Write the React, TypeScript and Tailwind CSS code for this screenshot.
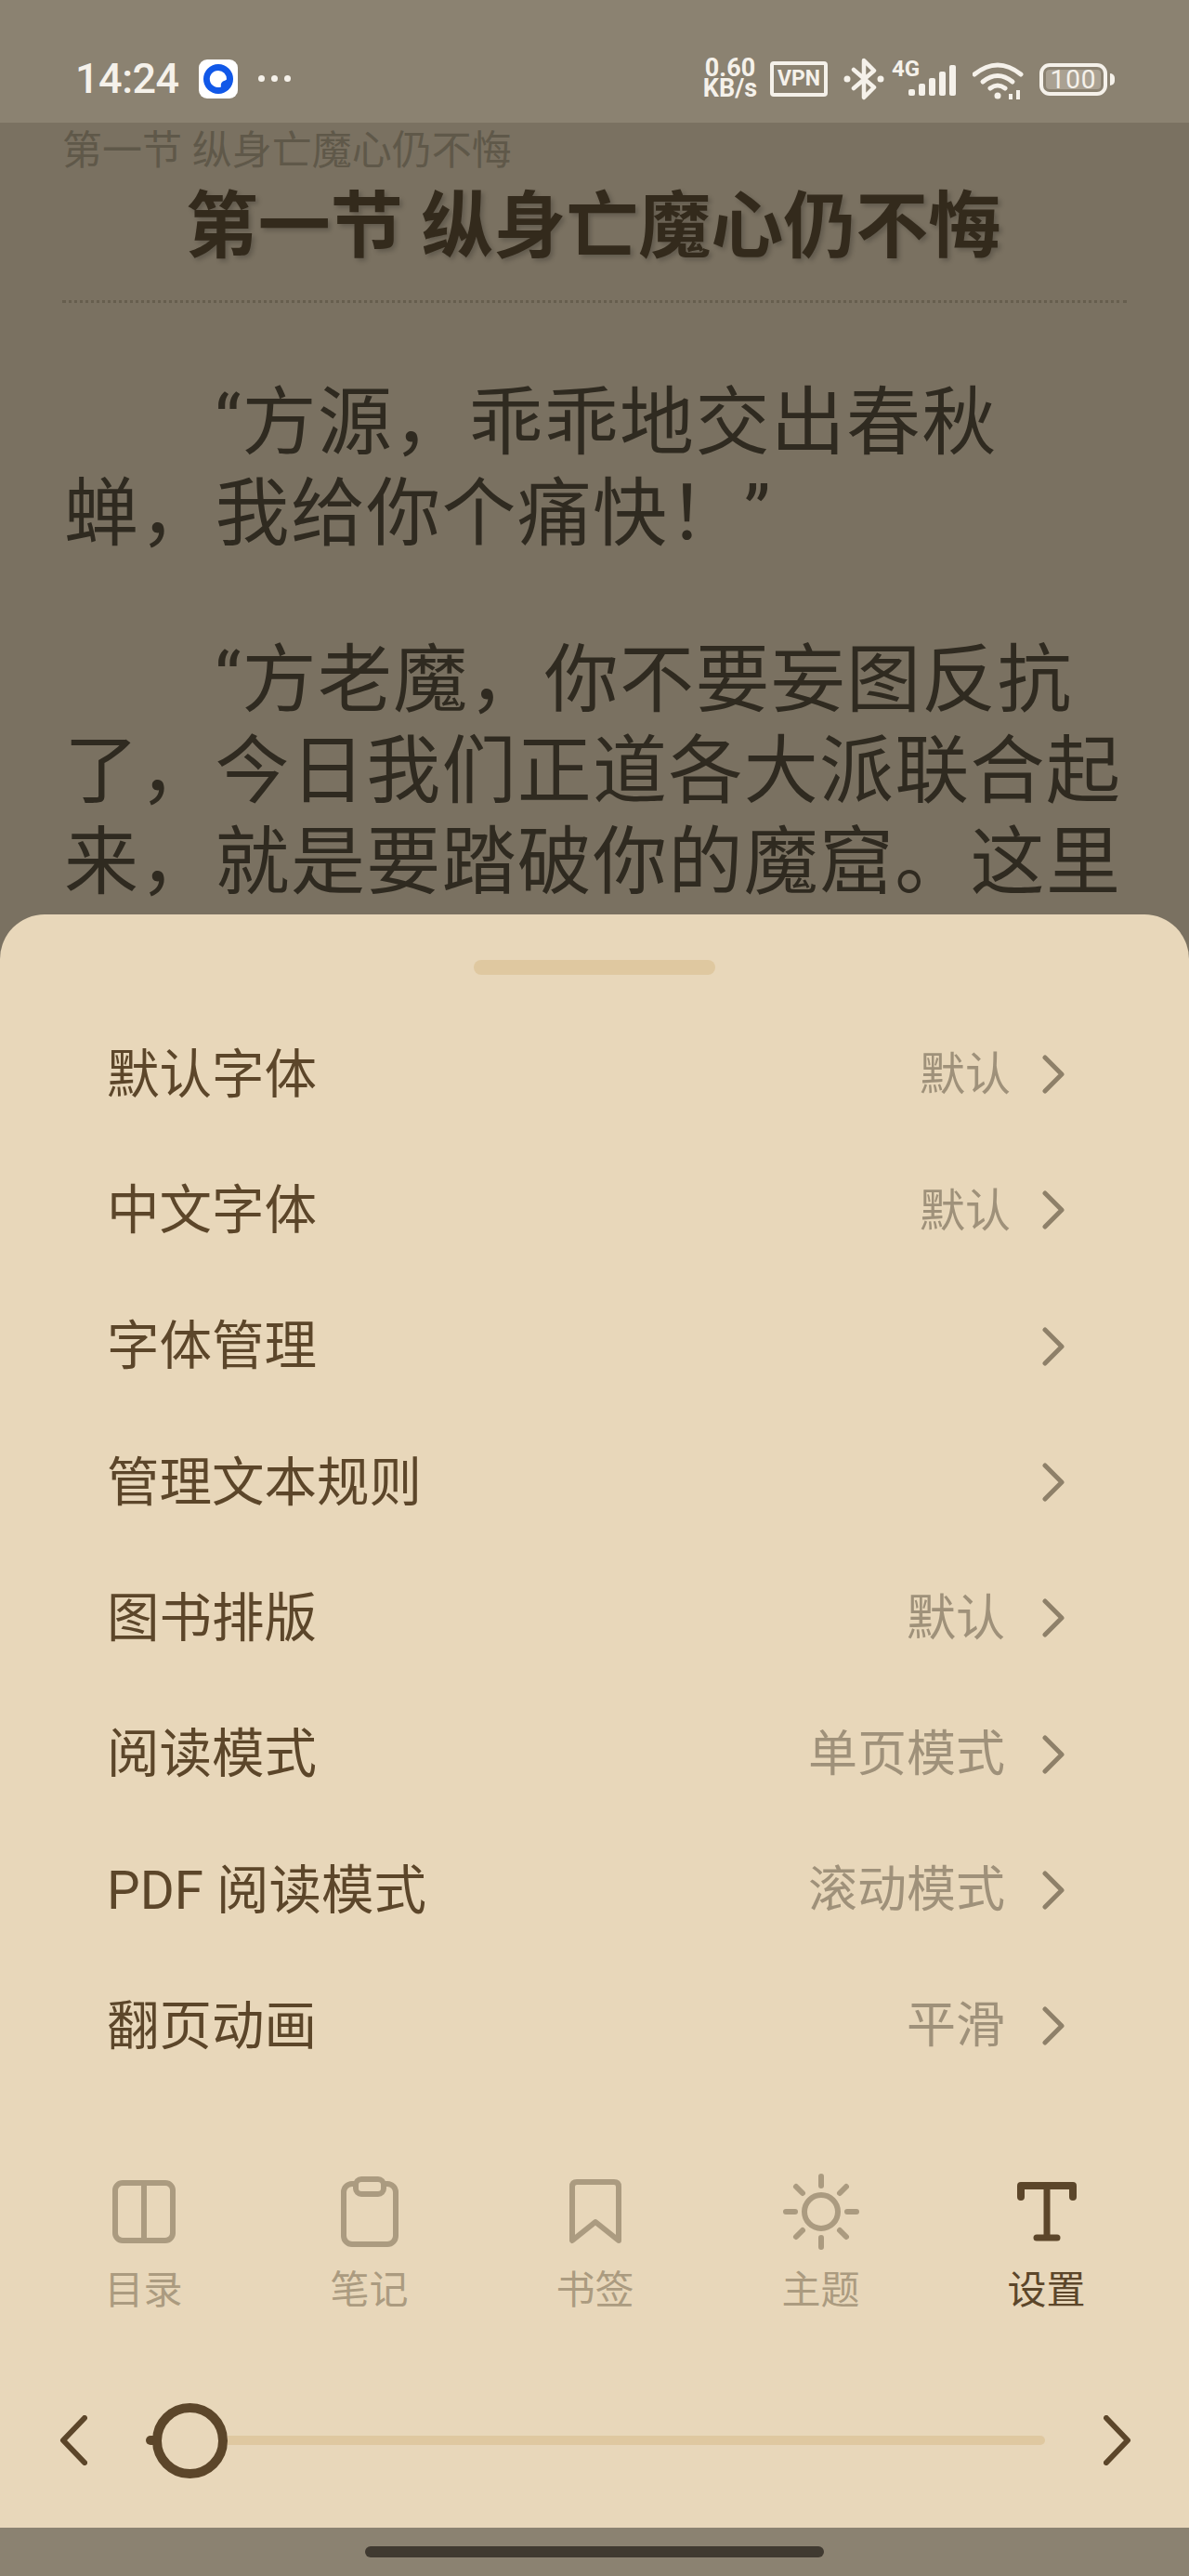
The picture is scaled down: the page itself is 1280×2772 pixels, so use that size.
const cjk = "font-['Roboto','Noto_Sans_CJK_SC',sans-serif]";

const rows = [
  { label: '默认字体', value: '默认', small: true },
  { label: '中文字体', value: '默认', small: true },
  { label: '字体管理', value: '' },
  { label: '管理文本规则', value: '' },
  { label: '图书排版', value: '默认' },
  { label: '阅读模式', value: '单页模式' },
  { label: 'PDF 阅读模式', value: '滚动模式' },
  { label: '翻页动画', value: '平滑' },
];

const Chevron = () => (
  <svg className="-mt-[2px]" width="26" height="42" viewBox="0 0 26 42" fill="none" stroke="#8e8069" strokeWidth="5" strokeLinecap="round" strokeLinejoin="round">
    <path d="M5 3 L23 21 L5 39" />
  </svg>
);

const StatusBar = () => (
  <div className="h-[132px] bg-[#8b8271] flex items-start pt-[62px] pl-[81px] text-[#f5f1ea]">
    <span className="w-[111px] h-[46px] text-[45px] leading-[46px] font-medium tracking-[-0.5px] font-['Roboto',sans-serif]">14:24</span>
    <div className="ml-[22px] w-[42px] h-[42px] mt-[2px] bg-white rounded-[9px] flex items-center justify-center">
      <svg width="32" height="32" viewBox="0 0 32 32">
        <circle cx="16" cy="16" r="16" fill="#1158e8" />
        <path d="M16 7 a9 9 0 1 0 3 17.4 q-1 -4 2 -6 q3 -1 4 -2 a9 9 0 0 0 -9 -9.4z" fill="#fff" />
      </svg>
    </div>
    <div className="ml-[22px] mt-[19px] flex gap-[7px]">
      <span className="w-[7px] h-[7px] rounded-full bg-[#f5f1ea]" />
      <span className="w-[7px] h-[7px] rounded-full bg-[#f5f1ea]" />
      <span className="w-[7px] h-[7px] rounded-full bg-[#f5f1ea]" />
    </div>
    <div className="ml-[444px] w-[58px] flex flex-col items-center font-bold font-['Roboto',sans-serif] text-[27px] leading-[22px]">
      <span className="h-[22px]">0.60</span>
      <span className="h-[22px]">KB/s</span>
    </div>
    <div className="ml-[14px] mt-[4px] w-[62px] h-[38px] border-[4px] border-[#f5f1ea] rounded-[4px] flex items-center justify-center text-[23px] font-bold font-['Roboto',sans-serif]">VPN</div>
    <svg className="ml-[17px]" width="44" height="46" viewBox="0 0 44 46" fill="none" stroke="#f5f1ea" strokeWidth="4.5" strokeLinejoin="round" strokeLinecap="round">
      <path d="M11 13 L33 32 L22 43 V3 L33 14 L11 33" />
      <circle cx="4" cy="23" r="3.5" fill="#f5f1ea" stroke="none" />
      <circle cx="40" cy="23" r="3.5" fill="#f5f1ea" stroke="none" />
    </svg>
    <div className="relative ml-[8px] w-[72px] h-[44px]">
      <span className="absolute left-0 top-0 text-[24px] leading-[24px] font-bold font-['Roboto',sans-serif]">4G</span>
      <svg className="absolute left-[18px] top-[8px]" width="54" height="34" viewBox="0 0 54 34" fill="#f5f1ea">
        <rect x="0" y="26" width="7" height="7" rx="2" />
        <rect x="11" y="20" width="7" height="13" rx="2" />
        <rect x="22" y="14" width="7" height="19" rx="2" />
        <rect x="33" y="7" width="7" height="26" rx="2" />
        <rect x="44" y="0" width="7" height="33" rx="2" />
      </svg>
    </div>
    <svg className="ml-[15px] mt-[4px]" width="56" height="42" viewBox="0 0 56 42" fill="none" stroke="#f5f1ea" strokeWidth="5" strokeLinecap="round">
      <path d="M2 14 Q27 -6 52 14" />
      <path d="M11 22 Q27 9 43 22" />
      <path d="M19 29 Q27 23 35 29" />
      <circle cx="27" cy="37" r="3.5" fill="#f5f1ea" stroke="none" />
      <path d="M41 35 V41 M49 31 V41" strokeWidth="4" strokeLinecap="butt" />
    </svg>
    <div className="ml-[16px] mt-[6px] w-[73px] h-[35px] border-[4px] border-[#f5f1ea] rounded-[11px] p-[3px] flex">
      <div className="flex-1 rounded-[4px] bg-[#aaa192] flex items-center justify-center text-[28px] font-normal font-['Roboto',sans-serif] tracking-[1px]">100</div>
    </div>
    <div className="ml-[3px] mt-[17px] w-[5px] h-[13px] rounded-r-full bg-[#f5f1ea]" />
  </div>
);

const Reader = () => (
  <div className={`h-[852px] overflow-hidden bg-[#7a7161] px-[67px] ${cjk}`}>
    <div className="pt-[3px] h-[57px] text-[43px] leading-[54px] text-[#5f5849]">第一节 纵身亡魔心仍不悔</div>
    <div className="mt-[11px] h-[90px] pr-[3px] text-center text-[78px] leading-[90px] font-bold text-[#332a1c] [text-shadow:3px_3px_5px_rgba(0,0,0,0.2)]">第一节 纵身亡魔心仍不悔</div>
    <div className="mt-[33px] border-b-[3px] border-dotted border-[#665e4e]" />
    <div className="mt-[80px] pl-[2px] text-[80px] leading-[98px] tracking-[1.3px] text-[#2f2a20]">
      <p className="indent-[162px]">“方源，乖乖地交出春秋蝉，我给你个痛快！”</p>
      <p className="mt-[81px] indent-[162px]">“方老魔，你不要妄图反抗了，今日我们正道各大派联合起来，就是要踏破你的魔窟。这里</p>
    </div>
  </div>
);

const TocIcon = () => (
  <svg width="68" height="68" viewBox="0 0 68 68" fill="none" stroke="#ab9b80" strokeWidth="6">
    <rect x="3" y="3" width="62" height="62" rx="8" />
    <path d="M34 3 V65" />
  </svg>
);

const NoteIcon = () => (
  <svg width="62" height="76" viewBox="0 0 62 76" fill="none" stroke="#ab9b80" strokeWidth="6">
    <rect x="3" y="8" width="56" height="65" rx="9" />
    <rect x="16" y="3" width="30" height="16" rx="6" fill="#e8d7ba" />
  </svg>
);

const BookmarkIcon = () => (
  <svg width="56" height="70" viewBox="0 0 56 70" fill="none" stroke="#ab9b80" strokeWidth="6" strokeLinejoin="round" strokeLinecap="round">
    <path d="M3 66 V8 Q3 3 8 3 H48 Q53 3 53 8 V66 L28 46 Z" />
  </svg>
);

const SunIcon = () => (
  <svg width="84" height="84" viewBox="0 0 84 84" fill="none" stroke="#ab9b80" strokeWidth="6" strokeLinecap="round">
    <circle cx="42" cy="42" r="18" />
    <path d="M42 4 V14 M42 70 V80 M4 42 H14 M70 42 H80 M15 15 L22 22 M62 62 L69 69 M15 69 L22 62 M62 22 L69 15" />
  </svg>
);

const FontIcon = () => (
  <svg width="64" height="64" viewBox="0 0 64 64" fill="none" stroke="#5c462a" strokeLinecap="round" strokeLinejoin="round">
    <path d="M4 16 V4 H60 V16" strokeWidth="8" />
    <path d="M32 4 V59" strokeWidth="7" />
    <path d="M21 60 H43" strokeWidth="7" />
  </svg>
);

const tabs = [
  { label: '目录', icon: <TocIcon />, active: false },
  { label: '笔记', icon: <NoteIcon />, active: false },
  { label: '书签', icon: <BookmarkIcon />, active: false },
  { label: '主题', icon: <SunIcon />, active: false },
  { label: '设置', icon: <FontIcon />, active: true },
];

const Sheet = () => (
  <div className={`h-[1736px] bg-[#e8d7ba] rounded-t-[48px] ${cjk}`}>
    <div className="pt-[49px] flex justify-center">
      <div className="w-[260px] h-[16px] rounded-[8px] bg-[#dfc8a0]" />
    </div>
    <div className="mt-[35px]">
      {rows.map((row) => (
        <div key={row.label} className="h-[146.3px] flex items-center pl-[115px] pr-[134px]">
          <span className="text-[56.5px] text-[#5c462a]">{row.label}</span>
          <span className="flex-1" />
          {row.value && (
            row.small
              ? <span className="mr-[32px] text-[49px] text-[#9f917a]">{row.value}</span>
              : <span className="mr-[38px] text-[53px] text-[#9f917a]">{row.value}</span>
          )}
          <Chevron />
        </div>
      ))}
    </div>
    <div className="mt-[85px] ml-[33px] w-[1215px] grid grid-cols-5">
      {tabs.map((tab) => (
        <div key={tab.label} className="flex flex-col items-center">
          <div className="h-[84px] -mt-[1px] mb-[1px] flex items-center justify-center">{tab.icon}</div>
          <span className={tab.active ? 'mt-[14px] text-[42px] leading-[56px] text-[#5c462a]' : 'mt-[14px] text-[42px] leading-[56px] text-[#ab9b80]'}>{tab.label}</span>
        </div>
      ))}
    </div>
    <div className="mt-[88px] h-[90px] flex items-center pl-[64px] pr-[62px]">
      <svg width="30" height="54" viewBox="0 0 30 54" fill="none" stroke="#5c462a" strokeWidth="6" strokeLinecap="round" strokeLinejoin="round">
        <path d="M27 3 L4 27 L27 51" />
      </svg>
      <div className="ml-[63px] w-[10px] h-[10px] rounded-l-full bg-[#5c462a]" />
      <div className="-ml-[3px] w-[81px] h-[81px] rounded-full border-[10px] border-[#5c462a] shrink-0" />
      <div className="flex-1 h-[10px] rounded-r-full bg-[#dfc8a0]" />
      <svg className="ml-[63px]" width="30" height="54" viewBox="0 0 30 54" fill="none" stroke="#5c462a" strokeWidth="6" strokeLinecap="round" strokeLinejoin="round">
        <path d="M3 3 L26 27 L3 51" />
      </svg>
    </div>
  </div>
);

export default function App() {
  return (
    <div className="w-[1280px] h-[2772px] overflow-hidden bg-[#7a7161]">
      <StatusBar />
      <Reader />
      <Sheet />
      <div className="h-[52px] bg-[#8b8271] pt-[20px] flex justify-center">
        <div className="w-[494px] h-[12px] rounded-full bg-[#403a31]" />
      </div>
    </div>
  );
}
